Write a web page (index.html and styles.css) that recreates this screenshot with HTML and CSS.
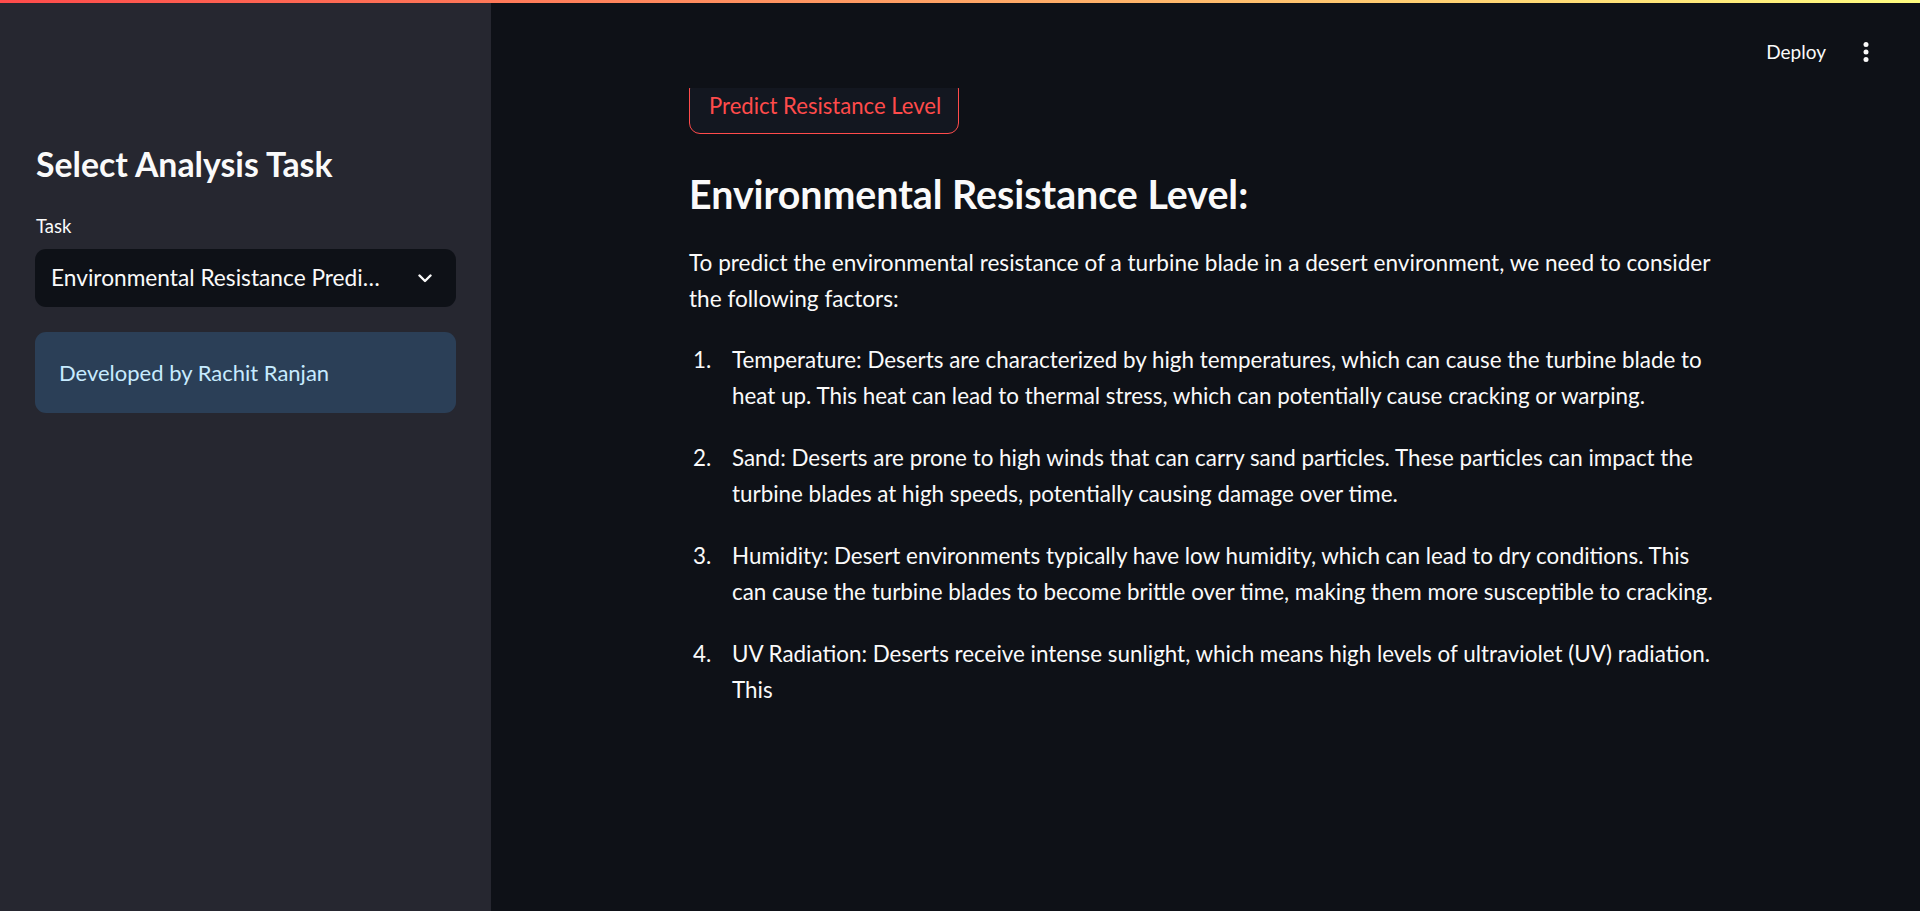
FILE: index.html
```html
<!DOCTYPE html>
<html lang="en">
<head>
<meta charset="utf-8">
<title>Environmental Resistance Prediction</title>
<link rel="stylesheet" href="styles.css">
</head>
<body>
<div class="decoration"></div>
<div class="app">
  <aside class="sidebar">
    <h2 class="side-title">Select Analysis Task</h2>
    <label class="field-label">Task</label>
    <div class="select">
      <span class="select-value">Environmental Resistance Predi…</span>
      <svg class="chevron" viewBox="0 0 14 9" width="14" height="9"><path d="M1.5 1.5 L7 7 L12.5 1.5" fill="none" stroke="#fafafa" stroke-width="2.4" stroke-linecap="round" stroke-linejoin="round"/></svg>
    </div>
    <div class="info">Developed by Rachit Ranjan</div>
  </aside>
  <main class="main">
    <header class="header">
      <div class="toolbar">
        <span class="deploy">Deploy</span>
        <svg class="kebab" viewBox="0 0 6 20" width="6" height="20"><circle cx="3" cy="2.6" r="2.5" fill="#fafafa"/><circle cx="3" cy="10" r="2.5" fill="#fafafa"/><circle cx="3" cy="17.4" r="2.5" fill="#fafafa"/></svg>
      </div>
    </header>
    <section class="content">
      <button class="btn">Predict Resistance Level</button>
      <h3 class="result-title">Environmental Resistance Level:</h3>
      <p class="para">To predict the environmental resistance of a turbine blade in a desert environment, we need to consider<br>the following factors:</p>
      <ol class="factors">
        <li>Temperature: Deserts are characterized by high temperatures, which can cause the turbine blade to<br>heat up. This heat can lead to thermal stress, which can potentially cause cracking or warping.</li>
        <li>Sand: Deserts are prone to high winds that can carry sand particles. These particles can impact the<br>turbine blades at high speeds, potentially causing damage over time.</li>
        <li>Humidity: Desert environments typically have low humidity, which can lead to dry conditions. This<br>can cause the turbine blades to become brittle over time, making them more susceptible to cracking.</li>
        <li>UV Radiation: Deserts receive intense sunlight, which means high levels of ultraviolet (UV) radiation.<br>This</li>
      </ol>
    </section>
  </main>
</div>
</body>
</html>
```
FILE: styles.css
```css
html, body {
  margin: 0;
  padding: 0;
}
body {
  background: #0e1117;
  color: #fafafa;
  font-family: Lato, "Noto Sans", sans-serif;
  height: 911px;
  overflow: hidden;
}
.decoration {
  height: 3px;
  background: linear-gradient(90deg, #ff4b4b 0%, #fffd80 100%);
}
.app {
  display: flex;
  height: 908px;
}
.sidebar {
  width: 491px;
  flex: 0 0 491px;
  box-sizing: border-box;
  background: #262730;
  padding: 143px 35px 0 35px;
  display: flex;
  flex-direction: column;
}
.side-title {
  margin: 0 0 0 1px;
  font-size: 33.8px;
  line-height: 37.2px;
  font-weight: 700;
}
.field-label {
  margin: 31px 0 0 1px;
  font-size: 18.5px;
  line-height: 24px;
}
.select {
  margin-top: 11px;
  height: 58px;
  border-radius: 11px;
  background: #0e1117;
  display: flex;
  align-items: center;
  justify-content: space-between;
  padding: 0 24px 0 16px;
}
.select-value {
  font-size: 22.7px;
  line-height: 28px;
  white-space: nowrap;
}
.chevron {
  display: block;
}
.info {
  margin-top: 25px;
  height: 81px;
  border-radius: 11px;
  background: #2b3f57;
  color: #c7ebff;
  display: flex;
  align-items: center;
  padding: 0 24px;
  font-size: 22px;
  line-height: 28px;
}
.main {
  flex: 1;
  position: relative;
  min-width: 0;
}
.header {
  position: absolute;
  top: 0;
  left: 0;
  right: 0;
  height: 85px;
  background: #0e1117;
  z-index: 2;
  display: flex;
  justify-content: flex-end;
  align-items: flex-start;
  padding: 37px 51px 0 0;
  box-sizing: border-box;
}
.toolbar {
  display: flex;
  align-items: center;
  gap: 37px;
  height: 24px;
}
.deploy {
  font-size: 19px;
  line-height: 24px;
}
.kebab {
  display: block;
}
.content {
  width: 1033px;
  margin: 0 auto;
  padding-top: 75px;
}
.btn {
  display: block;
  height: 56px;
  box-sizing: border-box;
  padding: 0 17px 0 19px;
  border: 1px solid #ff4b4b;
  border-radius: 11px;
  background: #131720;
  color: #ff4b4b;
  font-family: inherit;
  font-size: 22.1px;
  line-height: 28px;
}
.result-title {
  margin: 37px 0 0 0;
  font-size: 39.3px;
  line-height: 46.8px;
  font-weight: 700;
}
.para {
  margin: 27px 0 0 0;
  font-size: 22.6px;
  line-height: 36px;
  white-space: nowrap;
}
.factors {
  margin: 25px 0 0 0;
  padding-left: 28px;
  font-size: 22.4px;
  line-height: 36px;
  white-space: nowrap;
}
.factors li {
  padding-left: 15px;
}
.factors li + li {
  margin-top: 26px;
}
```
